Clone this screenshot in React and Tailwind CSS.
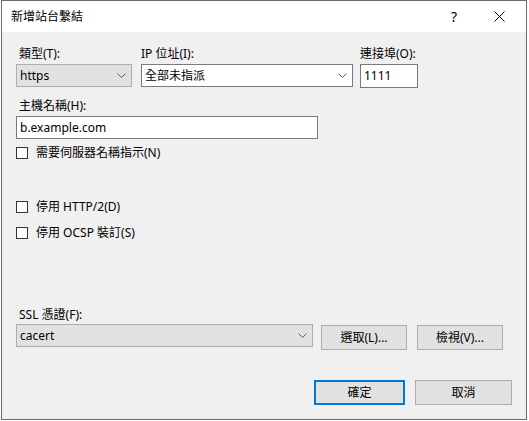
import React from 'react';

const font = { fontFamily: '"Noto Sans", "Noto Sans CJK TC", sans-serif' };

const Chevron = () => (
  <svg width="9" height="6" viewBox="0 0 9 6" className="shrink-0">
    <polyline points="0.5,0.5 4.5,4.5 8.5,0.5" fill="none" stroke="#606060" strokeWidth="1" />
  </svg>
);

const Select = ({ value, className, gray }) => (
  <div
    className={[
      gray ? 'bg-[#e1e1e1] border-[#adadad]' : 'bg-white border-[#7a7a7a]',
      'h-[23px] border flex items-center justify-between pl-[3px] pr-[5px] text-[12px] leading-[16px] text-black',
      className,
    ].join(' ')}
  >
    <span>{value}</span>
    <Chevron />
  </div>
);

const Checkbox = ({ label, className }) => (
  <div className={['flex items-center h-[16px] gap-[8px]', className].join(' ')}>
    <div className="w-[12px] h-[12px] border border-[#333333] bg-white" />
    <span className="text-[12px] leading-[16px] text-black">{label}</span>
  </div>
);

const Button = ({ children, className }) => (
  <button
    className={[
      'h-[25px] bg-[#e1e1e1] text-[12px] leading-[16px] text-black flex items-center justify-center',
      className,
    ].join(' ')}
  >
    {children}
  </button>
);

const App = () => {
  return (
    <div className="w-[529px] h-[421px] bg-white overflow-hidden" style={font}>
      <div className="ml-[1px] w-[526px] h-[420px] border border-[#6a6a6a] flex flex-col">
        <div className="h-[31px] bg-white flex items-center pl-[9px] shrink-0">
          <span className="text-[12px] leading-[16px] text-black">新增站台繫結</span>
          <span className="ml-auto text-[14px] leading-[16px] text-black mr-[37px]">?</span>
          <svg width="11" height="11" viewBox="0 0 11 11" className="mr-[21px]">
            <path d="M0.5 0.5 L10.5 10.5 M10.5 0.5 L0.5 10.5" stroke="#000" strokeWidth="1" />
          </svg>
        </div>

        <div className="flex-1 bg-[#f0f0f0] pl-[14px] flex flex-col text-[12px] leading-[16px] text-black">
          <div className="flex mt-[14px]">
            <div className="w-[116px] flex flex-col">
              <span className="pl-[3px]">類型(T):</span>
              <Select value="https" gray className="mt-[2px] w-[116px]" />
            </div>
            <div className="w-[212px] ml-[9px] flex flex-col">
              <span>IP 位址(I):</span>
              <Select value="全部未指派" className="mt-[2px] w-[212px]" />
            </div>
            <div className="w-[58px] ml-[7px] flex flex-col">
              <span>連接埠(O):</span>
              <div className="mt-[2px] h-[24px] border border-[#7a7a7a] bg-white flex items-center pl-[3px]">
                1111
              </div>
            </div>
          </div>

          <span className="pl-[3px] mt-[10px]">主機名稱(H):</span>
          <div className="mt-[2px] w-[302px] h-[23px] border border-[#7a7a7a] bg-white flex items-center pl-[3px]">
            b.example.com
          </div>

          <Checkbox label="需要伺服器名稱指示(N)" className="mt-[6px]" />
          <Checkbox label="停用 HTTP/2(D)" className="mt-[38px]" />
          <Checkbox label="停用 OCSP 裝訂(S)" className="mt-[10px]" />

          <span className="pl-[3px] mt-[66px]">SSL 憑證(F):</span>
          <div className="flex items-start mt-[1px]">
            <Select value="cacert" gray className="w-[297px]" />
            <Button className="ml-[8px] w-[86px] mt-[1px] border border-[#adadad]">選取(L)...</Button>
            <Button className="ml-[10px] w-[86px] mt-[1px] border border-[#adadad]">檢視(V)...</Button>
          </div>

          <div className="flex mt-[30px]">
            <Button className="ml-[298px] w-[91px] border-2 border-[#0078d7]">確定</Button>
            <Button className="ml-[10px] w-[97px] border border-[#adadad]">取消</Button>
          </div>
        </div>
      </div>
    </div>
  );
};

export default App;
